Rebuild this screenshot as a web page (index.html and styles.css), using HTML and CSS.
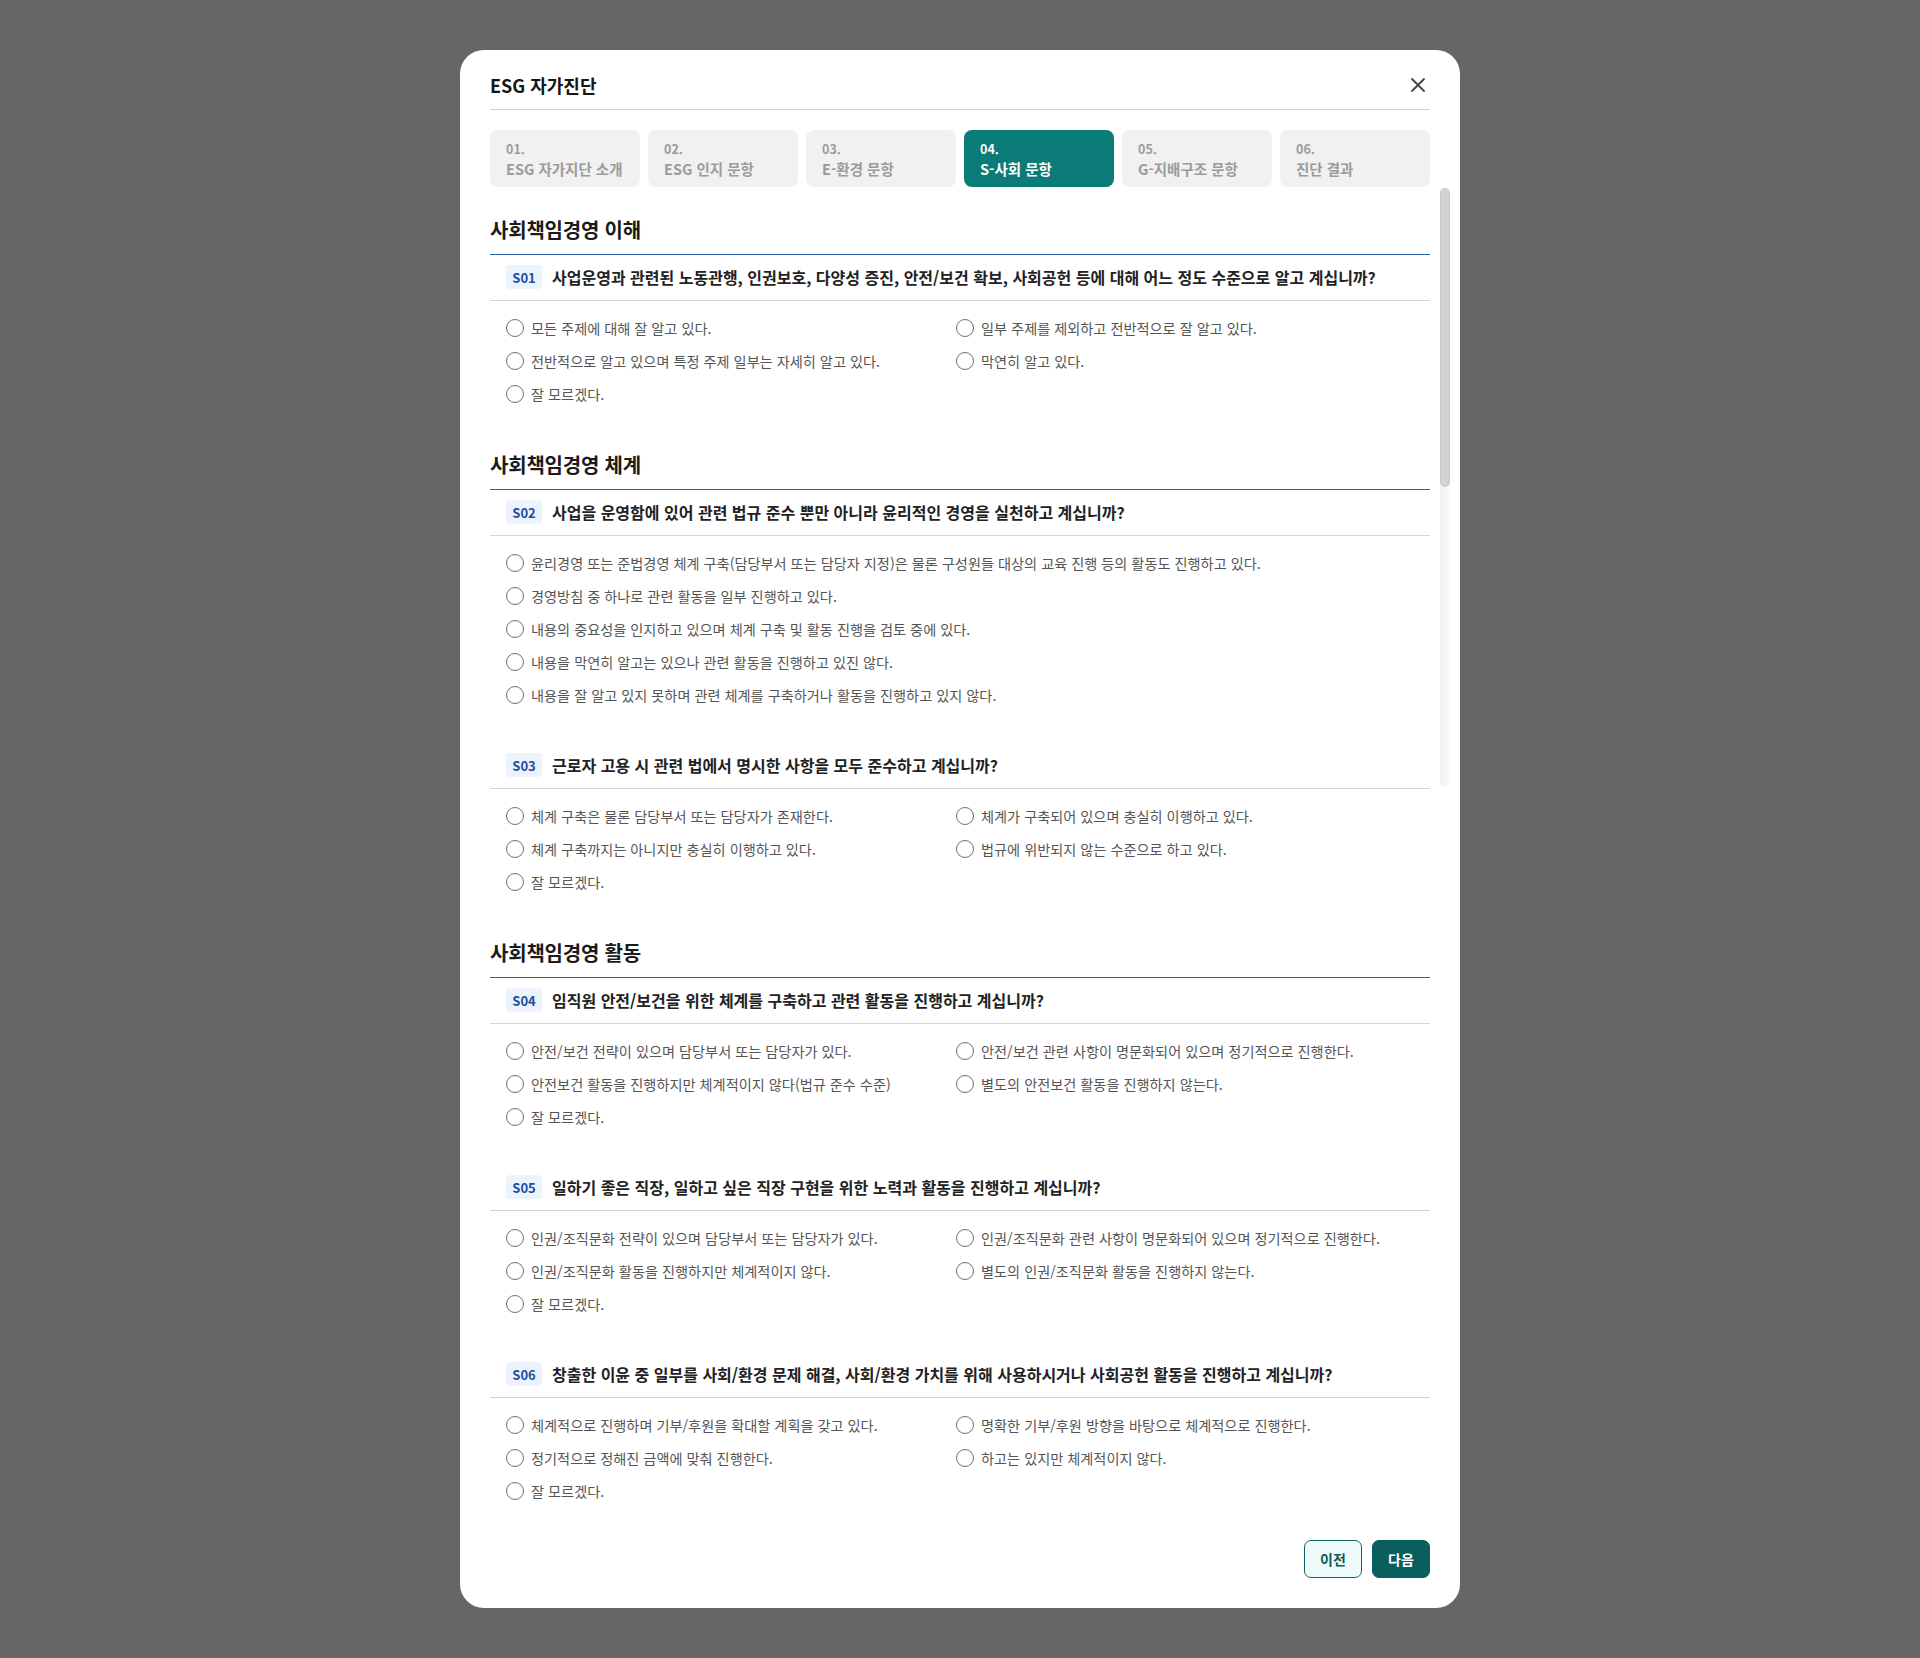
FILE: index.html
```html
<!DOCTYPE html>
<html lang="ko">
<head>
<meta charset="utf-8">
<title>ESG 자가진단</title>
<link rel="stylesheet" href="styles.css">
</head>
<body>
<div class="modal">
  <div class="modal-header">
    <h1 class="modal-title">ESG 자가진단</h1>
    <button class="close-btn" aria-label="닫기">
      <svg width="16" height="16" viewBox="0 0 16 16"><path d="M2 2 L14 14 M14 2 L2 14" stroke="#444" stroke-width="1.8" stroke-linecap="round"/></svg>
    </button>
  </div>

  <div class="tabs">
    <div class="tab"><span class="tab-num">01.</span><span class="tab-label">ESG 자가지단 소개</span></div>
    <div class="tab"><span class="tab-num">02.</span><span class="tab-label">ESG 인지 문항</span></div>
    <div class="tab"><span class="tab-num">03.</span><span class="tab-label">E-환경 문항</span></div>
    <div class="tab active"><span class="tab-num">04.</span><span class="tab-label">S-사회 문항</span></div>
    <div class="tab"><span class="tab-num">05.</span><span class="tab-label">G-지배구조 문항</span></div>
    <div class="tab"><span class="tab-num">06.</span><span class="tab-label">진단 결과</span></div>
  </div>

  <div class="sections">
    <section class="section">
      <h2 class="section-title">사회책임경영 이해</h2>
      <div class="question">
        <div class="q-head"><span class="badge">S01</span><span class="q-text">사업운영과 관련된 노동관행, 인권보호, 다양성 증진, 안전/보건 확보, 사회공헌 등에 대해 어느 정도 수준으로 알고 계십니까?</span></div>
        <div class="options">
          <label class="option"><span class="radio"></span>모든 주제에 대해 잘 알고 있다.</label>
          <label class="option"><span class="radio"></span>일부 주제를 제외하고 전반적으로 잘 알고 있다.</label>
          <label class="option"><span class="radio"></span>전반적으로 알고 있으며 특정 주제 일부는 자세히 알고 있다.</label>
          <label class="option"><span class="radio"></span>막연히 알고 있다.</label>
          <label class="option"><span class="radio"></span>잘 모르겠다.</label>
        </div>
      </div>
    </section>

    <section class="section">
      <h2 class="section-title">사회책임경영 체계</h2>
      <div class="question">
        <div class="q-head"><span class="badge">S02</span><span class="q-text">사업을 운영함에 있어 관련 법규 준수 뿐만 아니라 윤리적인 경영을 실천하고 계십니까?</span></div>
        <div class="options single">
          <label class="option"><span class="radio"></span>윤리경영 또는 준법경영 체계 구축(담당부서 또는 담당자 지정)은 물론 구성원들 대상의 교육 진행 등의 활동도 진행하고 있다.</label>
          <label class="option"><span class="radio"></span>경영방침 중 하나로 관련 활동을 일부 진행하고 있다.</label>
          <label class="option"><span class="radio"></span>내용의 중요성을 인지하고 있으며 체계 구축 및 활동 진행을 검토 중에 있다.</label>
          <label class="option"><span class="radio"></span>내용을 막연히 알고는 있으나 관련 활동을 진행하고 있진 않다.</label>
          <label class="option"><span class="radio"></span>내용을 잘 알고 있지 못하며 관련 체계를 구축하거나 활동을 진행하고 있지 않다.</label>
        </div>
      </div>
      <div class="question">
        <div class="q-head"><span class="badge">S03</span><span class="q-text">근로자 고용 시 관련 법에서 명시한 사항을 모두 준수하고 계십니까?</span></div>
        <div class="options">
          <label class="option"><span class="radio"></span>체계 구축은 물론 담당부서 또는 담당자가 존재한다.</label>
          <label class="option"><span class="radio"></span>체계가 구축되어 있으며 충실히 이행하고 있다.</label>
          <label class="option"><span class="radio"></span>체계 구축까지는 아니지만 충실히 이행하고 있다.</label>
          <label class="option"><span class="radio"></span>법규에 위반되지 않는 수준으로 하고 있다.</label>
          <label class="option"><span class="radio"></span>잘 모르겠다.</label>
        </div>
      </div>
    </section>

    <section class="section">
      <h2 class="section-title">사회책임경영 활동</h2>
      <div class="question">
        <div class="q-head"><span class="badge">S04</span><span class="q-text">임직원 안전/보건을 위한 체계를 구축하고 관련 활동을 진행하고 계십니까?</span></div>
        <div class="options">
          <label class="option"><span class="radio"></span>안전/보건 전략이 있으며 담당부서 또는 담당자가 있다.</label>
          <label class="option"><span class="radio"></span>안전/보건 관련 사항이 명문화되어 있으며 정기적으로 진행한다.</label>
          <label class="option"><span class="radio"></span>안전보건 활동을 진행하지만 체계적이지 않다(법규 준수 수준)</label>
          <label class="option"><span class="radio"></span>별도의 안전보건 활동을 진행하지 않는다.</label>
          <label class="option"><span class="radio"></span>잘 모르겠다.</label>
        </div>
      </div>
      <div class="question">
        <div class="q-head"><span class="badge">S05</span><span class="q-text">일하기 좋은 직장, 일하고 싶은 직장 구현을 위한 노력과 활동을 진행하고 계십니까?</span></div>
        <div class="options">
          <label class="option"><span class="radio"></span>인권/조직문화 전략이 있으며 담당부서 또는 담당자가 있다.</label>
          <label class="option"><span class="radio"></span>인권/조직문화 관련 사항이 명문화되어 있으며 정기적으로 진행한다.</label>
          <label class="option"><span class="radio"></span>인권/조직문화 활동을 진행하지만 체계적이지 않다.</label>
          <label class="option"><span class="radio"></span>별도의 인권/조직문화 활동을 진행하지 않는다.</label>
          <label class="option"><span class="radio"></span>잘 모르겠다.</label>
        </div>
      </div>
      <div class="question">
        <div class="q-head"><span class="badge">S06</span><span class="q-text">창출한 이윤 중 일부를 사회/환경 문제 해결, 사회/환경 가치를 위해 사용하시거나 사회공헌 활동을 진행하고 계십니까?</span></div>
        <div class="options">
          <label class="option"><span class="radio"></span>체계적으로 진행하며 기부/후원을 확대할 계획을 갖고 있다.</label>
          <label class="option"><span class="radio"></span>명확한 기부/후원 방향을 바탕으로 체계적으로 진행한다.</label>
          <label class="option"><span class="radio"></span>정기적으로 정해진 금액에 맞춰 진행한다.</label>
          <label class="option"><span class="radio"></span>하고는 있지만 체계적이지 않다.</label>
          <label class="option"><span class="radio"></span>잘 모르겠다.</label>
        </div>
      </div>
    </section>
  </div>

  <div class="footer">
    <button class="btn btn-prev">이전</button>
    <button class="btn btn-next">다음</button>
  </div>

  <div class="scrollbar"><div class="scroll-thumb"></div></div>
</div>
</body>
</html>
```

FILE: styles.css
```css
* { box-sizing: border-box; }

html, body {
  margin: 0;
  padding: 0;
}

body {
  background: #666666;
  font-family: "Noto Sans CJK KR", "Noto Sans", sans-serif;
  color: #222;
  padding: 50px 0;
}

.modal {
  position: relative;
  width: 1000px;
  margin: 0 auto;
  background: #fff;
  border-radius: 24px;
  padding: 0 30px 30px;
}

.modal-header {
  display: flex;
  align-items: center;
  justify-content: space-between;
  height: 60px;
  padding-top: 10px;
  border-bottom: 1px solid #d2d2d2;
}

.modal-title {
  margin: 0;
  font-size: 18px;
  font-weight: 700;
  line-height: 22px;
  color: #151515;
}

.close-btn {
  border: 0;
  background: none;
  padding: 0;
  width: 16px;
  height: 16px;
  margin-right: 4px;
  display: flex;
}

.tabs {
  display: grid;
  grid-template-columns: repeat(6, 1fr);
  gap: 8px;
  margin-top: 20px;
}

.tab {
  display: flex;
  flex-direction: column;
  height: 57px;
  padding: 9px 16px 0;
  background: #f1f1f1;
  border-radius: 8px;
  color: #9b9b9b;
  font-weight: 700;
}

.tab-num {
  font-size: 12.5px;
  line-height: 19px;
}

.tab-label {
  font-size: 14.5px;
  line-height: 21px;
}

.tab.active {
  background: #0b7b77;
  color: #fff;
}

.sections {
  margin-top: 29px;
}

.section + .section {
  margin-top: 45px;
}

.section-title {
  margin: 0;
  font-size: 20px;
  font-weight: 700;
  line-height: 27px;
  letter-spacing: -0.2px;
  color: #1b1b1b;
  padding-bottom: 11px;
  border-bottom: 1px solid #2d62a6;
}

.question + .question {
  margin-top: 36px;
}

.q-head {
  display: flex;
  align-items: center;
  gap: 10px;
  height: 46px;
  padding: 0 16px 1px;
  border-bottom: 1px solid #d4d4d4;
}

.badge {
  display: inline-flex;
  align-items: center;
  justify-content: center;
  width: 36px;
  height: 24px;
  border-radius: 4px;
  background: #edf3fc;
  color: #1c4f9f;
  font-size: 13px;
  font-weight: 700;
}

.q-text {
  font-size: 16px;
  font-weight: 700;
  color: #222;
}

.options {
  display: grid;
  grid-template-columns: 450px 1fr;
  row-gap: 9px;
  padding: 15px 16px 0;
}

.options.single {
  grid-template-columns: 1fr;
}

.option {
  display: flex;
  align-items: center;
  gap: 7px;
  height: 24px;
  font-size: 14.2px;
  color: #555;
  white-space: nowrap;
}

.radio {
  flex: none;
  width: 18px;
  height: 18px;
  border: 1.2px solid #707070;
  border-radius: 50%;
  background: #fff;
}

.footer {
  display: flex;
  justify-content: flex-end;
  gap: 10px;
  margin-top: 37px;
}

.btn {
  width: 58px;
  height: 38px;
  border-radius: 7px;
  font-family: "Noto Sans CJK KR", "Noto Sans", sans-serif;
  font-size: 14px;
  font-weight: 700;
  cursor: pointer;
}

.btn-prev {
  background: #eefafa;
  border: 1px solid #0e6464;
  color: #0d5b5b;
}

.btn-next {
  background: #0a5e5e;
  border: 1px solid #0a5e5e;
  color: #fff;
}

.scrollbar {
  position: absolute;
  top: 138px;
  right: 10px;
  width: 10px;
  height: 599px;
  border-radius: 5px;
  background: linear-gradient(to right, #f1f1f1, #fbfbfb);
}

.scroll-thumb {
  height: 299px;
  border-radius: 5px;
  background: #d3d3d3;
  border: 1px solid #c9c9c9;
}
```
